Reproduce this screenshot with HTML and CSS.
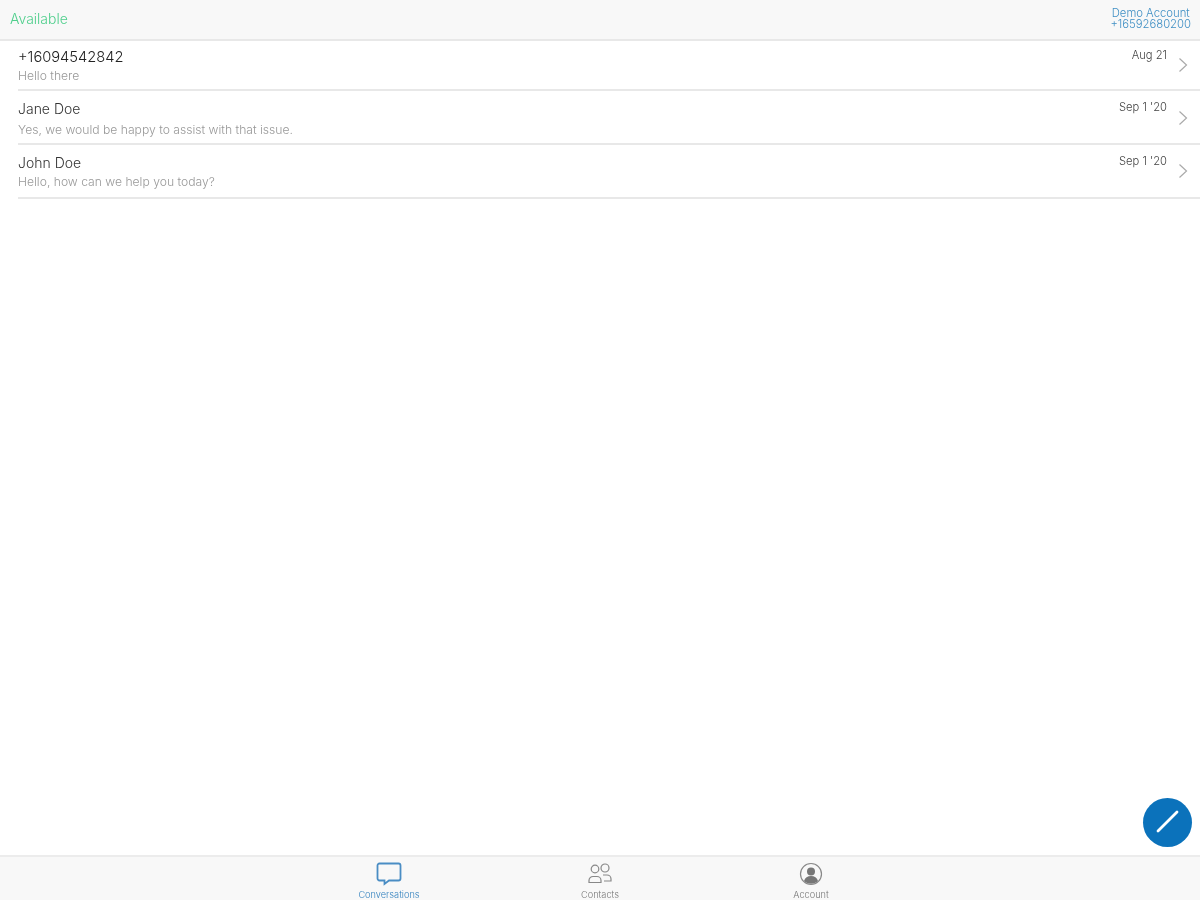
FILE: index.html
```html
<!DOCTYPE html>
<html lang="en">
<head>
<meta charset="utf-8">
<title>Conversations</title>
<link rel="stylesheet" href="styles.css">
</head>
<body>
<div class="app">
  <header class="topbar">
    <span class="status">Available</span>
    <div class="account">
      <span class="account-name">Demo Account</span>
      <span class="account-number">+16592680200</span>
    </div>
  </header>
  <main class="list">
    <div class="row row-first">
      <div class="row-main">
        <div class="name name-number">+16094542842</div>
        <div class="preview">Hello there</div>
      </div>
      <div class="date">Aug 21</div>
      <svg class="chevron" viewBox="0 0 10 16"><path d="M1.5 1.5 8.5 8 1.5 14.5"/></svg>
    </div>
    <div class="row row-second">
      <div class="row-main">
        <div class="name">Jane Doe</div>
        <div class="preview">Yes, we would be happy to assist with that issue.</div>
      </div>
      <div class="date">Sep 1 '20</div>
      <svg class="chevron" viewBox="0 0 10 16"><path d="M1.5 1.5 8.5 8 1.5 14.5"/></svg>
    </div>
    <div class="row">
      <div class="row-main">
        <div class="name">John Doe</div>
        <div class="preview">Hello, how can we help you today?</div>
      </div>
      <div class="date">Sep 1 '20</div>
      <svg class="chevron" viewBox="0 0 10 16"><path d="M1.5 1.5 8.5 8 1.5 14.5"/></svg>
    </div>
  </main>
  <button class="fab" aria-label="New conversation">
    <svg viewBox="0 0 49 49"><path d="M15 33 34 14"/></svg>
  </button>
  <nav class="tabbar">
    <div class="tab tab-active">
      <svg class="tab-icon" viewBox="0 0 26 24"><path d="M3.5 1.5h19a2 2 0 0 1 2 2v13a2 2 0 0 1-2 2H13l-4.500 3.500v-3.500h-5a2 2 0 0 1-2-2v-13a2 2 0 0 1 2-2z"/></svg>
      <span>Conversations</span>
    </div>
    <div class="tab">
      <svg class="tab-icon" viewBox="0 0 26 24"><circle cx="8" cy="7" r="3.800"/><circle cx="18" cy="6" r="4"/><path d="M2 20.500v-2a4 4 0 0 1 4-4h4a4 4 0 0 1 4 4v2z"/><path d="M16 13h4a4 4 0 0 1 4 4v2h-7"/></svg>
      <span>Contacts</span>
    </div>
    <div class="tab">
      <svg class="tab-icon" viewBox="0 0 24 24"><circle cx="12" cy="12" r="10.500"/><circle class="fill" cx="12" cy="9.500" r="4"/><path class="fill" d="M5 19c1-3.500 3.500-5 7-5s6 1.500 7 5c-2 1.800-4.500 2.700-7 2.700S7 20.800 5 19z"/></svg>
      <span>Account</span>
    </div>
  </nav>
</div>
</body>
</html>
```
FILE: styles.css
```css
* { box-sizing: border-box; }
html, body { margin: 0; height: 100%; }
body { font-family: Inter, "Liberation Sans", sans-serif; background: #fff; color: #333; }
.app { position: relative; height: 900px; display: flex; flex-direction: column; overflow: hidden; filter: blur(0.7px); }
.topbar { height: 41px; flex: none; display: flex; justify-content: space-between; align-items: center; padding: 0 9px 2px 10px; background: #f8f8f8; border-bottom: 2px solid #e8e8e8; }
.status { font-size: 14px; font-weight: 300; color: #4fcf8c; }
.account { display: flex; flex-direction: column; align-items: center; font-size: 11.300px; line-height: 11px; font-weight: 300; color: #3f8fc4; }
.list { flex: 1; }
.row { height: 54px; margin-left: 18px; padding: 8px 12px 0 0; display: flex; align-items: flex-start; border-bottom: 2px solid #e8e8e8; }
.row-first { height: 50px; padding-top: 6px; }
.row-main { flex: 1; }
.name { font-size: 14px; line-height: 20px; font-weight: 300; color: #333; }
.name-number { font-size: 14.700px; color: #222; }
.preview { font-size: 12.150px; line-height: 16px; font-weight: 300; color: #999; margin-top: 1px; }
.row-second .preview { margin-top: 3px; }
.date { font-size: 11.200px; line-height: 14px; font-weight: 300; color: #444; padding-top: 1px; margin-right: 11px; }
.chevron { width: 10px; height: 16px; margin-top: 10px; fill: none; stroke: #aaa; stroke-width: 1.200; }
.row-second .chevron { margin-top: 11px; }
.fab { position: absolute; left: 1143px; top: 798px; width: 49px; height: 49px; padding: 0; border: 0; border-radius: 50%; background: #0b72bb; }
.fab svg { display: block; width: 49px; height: 49px; fill: none; stroke: #fff; stroke-width: 2.800; stroke-linecap: round; }
.tabbar { height: 45px; flex: none; display: flex; justify-content: center; background: #f8f8f8; border-top: 2px solid #ececec; }
.tab { width: 211px; display: flex; flex-direction: column; align-items: center; padding-top: 5px; font-size: 9.200px; line-height: 10px; font-weight: 300; color: #777; }
.tab span { margin-top: 4px; }
.tab-icon { width: 26px; height: 24px; fill: none; stroke: #888; stroke-width: 1.200; }
.tab-icon .fill { fill: #777; stroke: none; }
.tab-active { color: #2f7fbd; }
.tab-active .tab-icon { stroke: #4a8dc4; stroke-width: 1.800; }
```
